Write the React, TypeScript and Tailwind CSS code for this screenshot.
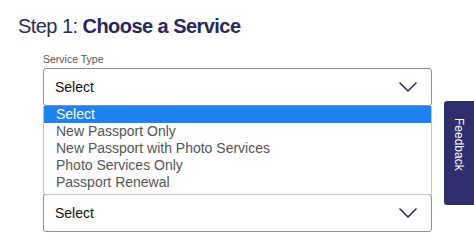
import React from 'react'

const options = [
  'Select',
  'New Passport Only',
  'New Passport with Photo Services',
  'Photo Services Only',
  'Passport Renewal',
]

const Chevron = () => (
  <svg width="18" height="10" viewBox="0 0 18 10" fill="none" className="shrink-0">
    <path d="M1 1l8 8 8-8" stroke="#2c2c54" strokeWidth="1.6" strokeLinecap="round" strokeLinejoin="round" />
  </svg>
)

const SelectBox = ({ className = '' }: { className?: string }) => (
  <div
    className={`flex h-[38px] items-center justify-between rounded-[3px] border border-[#8e8e9c] bg-white pl-[11px] pr-[14px] ${className}`}
  >
    <span className="text-[14px] text-[#111]">Select</span>
    <Chevron />
  </div>
)

export default function App() {
  return (
    <div
      className="relative h-[249px] w-[474px] overflow-hidden bg-white"
      style={{ fontFamily: '"Liberation Sans", Arial, sans-serif' }}
    >
      <h1 className="pl-[18px] pt-[15px] text-[20px] leading-[22px] tracking-[-0.55px] text-[#2b2d52]">
        Step 1: <span className="font-bold text-[#28285a]">Choose a Service</span>
      </h1>

      <div className="ml-[43px] mt-[16px] w-[389px]">
        <label className="block text-[10.5px] leading-[13px] text-[#555]">Service Type</label>

        <div className="relative mt-[2px]">
          <SelectBox />
          {/* open dropdown list */}
          <ul className="absolute left-0 right-0 top-full z-10 border border-t-0 border-[#c4c4cc] bg-white pb-[3px]">
            {options.map((o, i) => (
              <li
                key={o}
                className={
                  i === 0
                    ? 'h-[17px] bg-[#1e82f0] pl-[12px] text-[14px] leading-[17px] text-white'
                    : 'h-[17px] pl-[12px] text-[14px] leading-[17px] text-[#555]'
                }
              >
                {o}
              </li>
            ))}
          </ul>
        </div>

        {/* content hidden under the list */}
        <div className="h-[88px]" />

        <SelectBox />
      </div>

      <div className="absolute right-0 top-[101px] flex h-[104px] w-[30px] justify-center rounded-l-[3px] bg-[#2e2e6c] pt-[17px]">
        <span className="text-[12px] leading-[14px] text-white [writing-mode:vertical-rl]">Feedback</span>
      </div>
    </div>
  )
}
